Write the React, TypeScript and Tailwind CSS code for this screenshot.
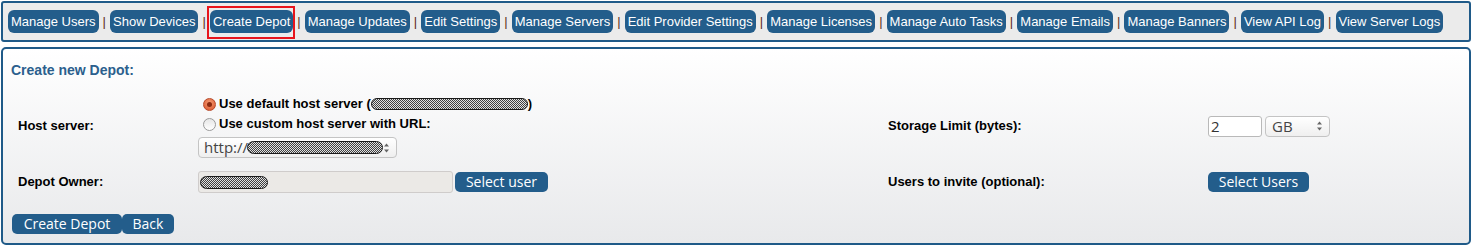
import React from "react";

const navItems = [
  "Manage Users",
  "Show Devices",
  "Create Depot",
  "Manage Updates",
  "Edit Settings",
  "Manage Servers",
  "Edit Provider Settings",
  "Manage Licenses",
  "Manage Auto Tasks",
  "Manage Emails",
  "Manage Banners",
  "View API Log",
  "View Server Logs",
];

// scribbled-out value (checker pattern pill)
const Redact: React.FC<{ className?: string }> = ({ className = "" }) => (
  <span
    className={`inline-block rounded-full border border-[#1a1a1a] bg-[repeating-conic-gradient(#3f3f3f_0_25%,#e2e2e2_0_50%)] bg-[length:2px_2px] ${className}`}
  />
);

const Spinner: React.FC = () => (
  <svg width="7" height="12" viewBox="0 0 7 12" className="shrink-0">
    <path d="M3.5 1.5 L6 4.5 L1 4.5 Z" fill="#666" />
    <path d="M3.5 10.5 L6 7.5 L1 7.5 Z" fill="#666" />
  </svg>
);

const Radio: React.FC<{ checked?: boolean }> = ({ checked }) =>
  checked ? (
    <span className="w-[13px] h-[13px] rounded-full bg-[radial-gradient(circle_at_50%_35%,#f49a72,#d9532a)] border border-[#b8492a] flex items-center justify-center">
      <span className="w-[5px] h-[5px] rounded-full bg-[#8c2a10]" />
    </span>
  ) : (
    <span className="w-[13px] h-[13px] rounded-full bg-gradient-to-b from-[#e6e6e6] to-white border border-[#9a9a9a]" />
  );

const BlueBtn: React.FC<{ children: React.ReactNode; className?: string }> = ({ children, className = "" }) => (
  <button
    type="button"
    className={`h-[20px] rounded-[5px] bg-[#235d8b] text-white text-[14px] leading-[20px] font-normal font-['Open_Sans',sans-serif] ${className}`}
  >
    {children}
  </button>
);

export default function App() {
  return (
    <div className="w-[1472px] h-[246px] bg-white font-['Liberation_Sans',Arial,sans-serif] overflow-hidden">
      {/* top navigation */}
      <div className="mx-[1px] mt-[1px] h-[41px] border-2 border-[#1f5a88] rounded-[3px] bg-[#ebebeb] flex items-center pl-[5px]">
        {navItems.map((item, i) => (
          <React.Fragment key={item}>
            {i > 0 && <span className="w-[11.5px] text-center text-[13px] text-[#5b2a1a]">|</span>}
            <span className="relative h-[23px] px-[3px] rounded-[6px] bg-[#235d8b] text-white text-[13px] leading-[23px] whitespace-nowrap">
              {item}
              {item === "Create Depot" && (
                <span className="absolute -top-[4px] -bottom-[6px] -left-[3px] -right-[2px] border-2 border-[#e8141b]" />
              )}
            </span>
          </React.Fragment>
        ))}
      </div>

      {/* form panel */}
      <div className="mx-[1px] mt-[5px] h-[198px] border-2 border-[#1f5a88] rounded-[5px] bg-gradient-to-b from-white to-[#e8e9eb] pl-[8px] pt-[13px]">
        <h2 className="text-[14px] leading-[17px] font-bold text-[#2b5f8d]">Create new Depot:</h2>

        <div className="ml-[7px] mt-[15px] grid grid-cols-[180px_690px_320px_1fr] items-center text-[13px] font-bold text-black">
          <div>Host server:</div>
          <div className="flex flex-col">
            <div className="h-[20px] flex items-center pl-[5px] gap-[3px]">
              <Radio checked />
              <span className="flex items-center">
                Use default host server (<Redact className="w-[157px] h-[12px]" />)
              </span>
            </div>
            <div className="h-[20px] flex items-center pl-[5px] gap-[3px]">
              <Radio />
              <span>Use custom host server with URL:</span>
            </div>
            <div className="mt-[3px] w-[199px] h-[21px] rounded-[4px] border border-[#c4c4c4] bg-gradient-to-b from-white to-[#efefef] flex items-center pl-[5px] pr-[6px] font-normal font-['Open_Sans',sans-serif] text-[15px] text-[#444]">
              <span>http://</span>
              <Redact className="w-[137px] h-[13px] -ml-[1px]" />
              <span className="flex-1" />
              <Spinner />
            </div>
          </div>
          <div>Storage Limit (bytes):</div>
          <div className="flex items-center gap-[3px]">
            <div className="w-[54px] h-[21px] rounded-[3px] border border-[#b9b9b9] bg-white pl-[2px] font-normal font-['Open_Sans',sans-serif] text-[15px] leading-[19px] text-[#333]">
              2
            </div>
            <div className="w-[65px] h-[21px] rounded-[4px] border border-[#c4c4c4] bg-gradient-to-b from-white to-[#efefef] flex items-center pl-[6px] pr-[6px] font-normal font-['Open_Sans',sans-serif] text-[15px] text-[#444]">
              <span>GB</span>
              <span className="flex-1" />
              <Spinner />
            </div>
          </div>

          <div className="mt-[13px]">Depot Owner:</div>
          <div className="mt-[13px] flex items-center gap-[2px]">
            <div className="w-[255px] h-[22px] rounded-[3px] border border-[#cfcccb] bg-[#ebe9e6] flex items-center pl-[1px]">
              <Redact className="w-[68px] h-[13px]" />
            </div>
            <BlueBtn className="w-[93px]">Select user</BlueBtn>
          </div>
          <div className="mt-[13px]">Users to invite (optional):</div>
          <div className="mt-[13px]">
            <BlueBtn className="w-[101px]">Select Users</BlueBtn>
          </div>
        </div>

        <div className="mt-[21px] ml-[1px] flex">
          <BlueBtn className="w-[110px]">Create Depot</BlueBtn>
          <BlueBtn className="w-[52px]">Back</BlueBtn>
        </div>
      </div>
    </div>
  );
}
